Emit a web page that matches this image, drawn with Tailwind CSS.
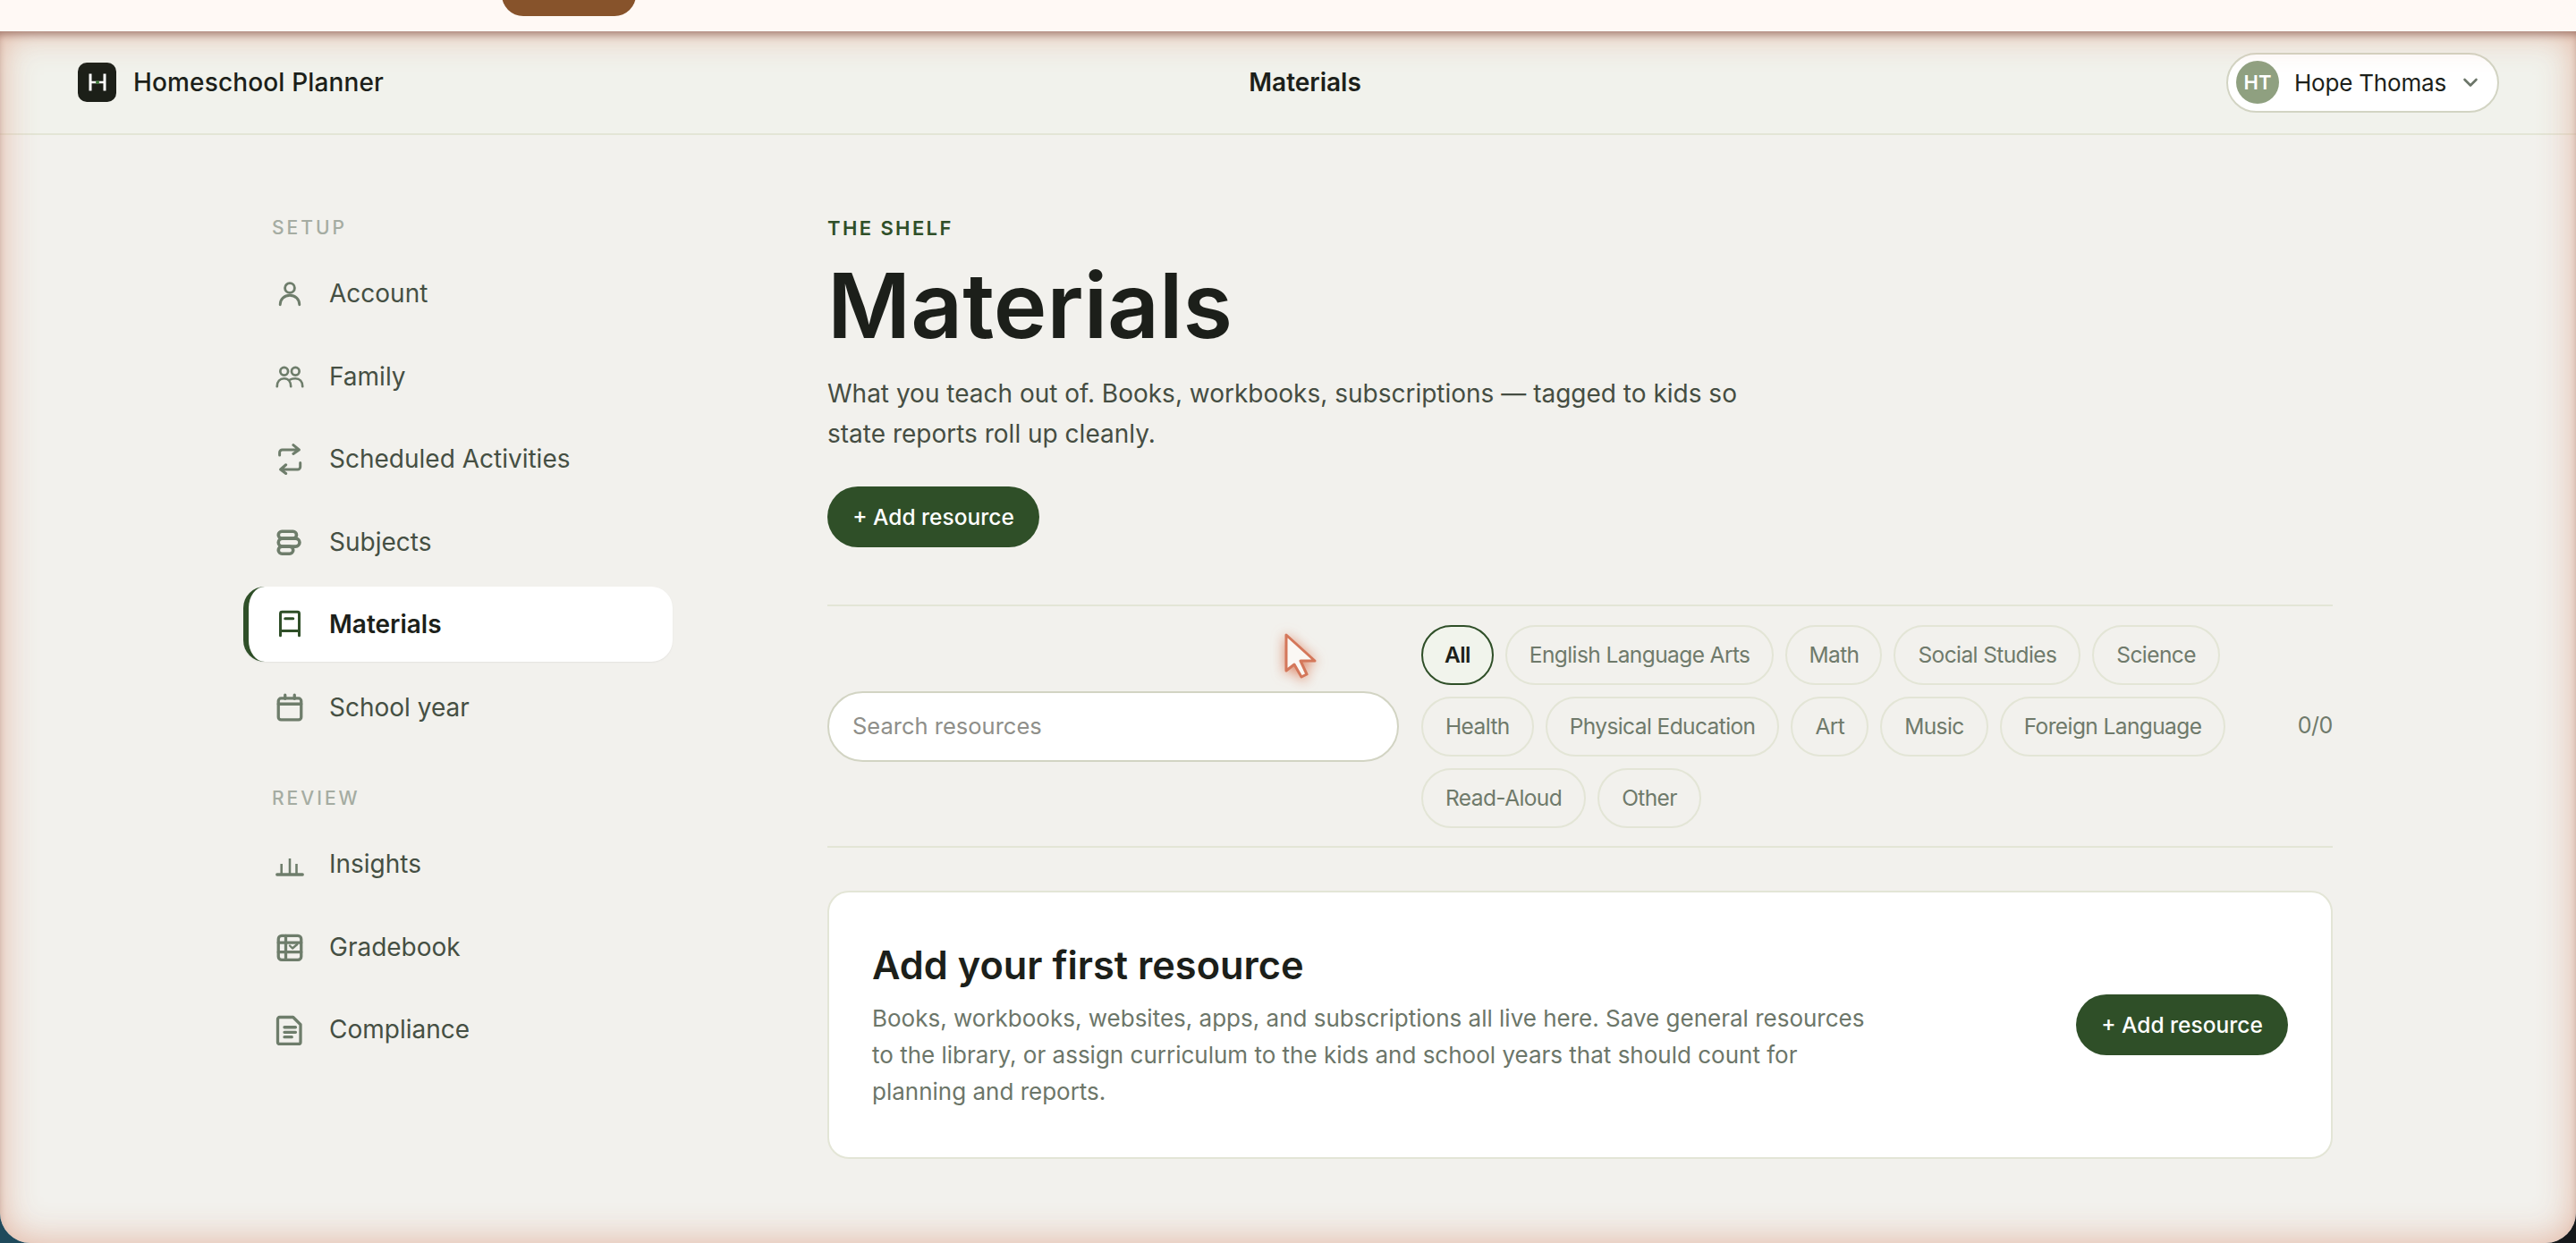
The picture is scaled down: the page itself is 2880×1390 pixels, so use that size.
<!DOCTYPE html>
<html lang="en">
<head>
<meta charset="utf-8">
<title>Materials</title>
<script src="https://cdn.jsdelivr.net/npm/@tailwindcss/browser@4"></script>
</head>
<body class="h-screen overflow-hidden bg-[linear-gradient(90deg,#1f4a5c,#16181a)] [font-family:Inter,sans-serif] text-[#1c1f1a]">
<div class="relative flex h-[1390px] flex-col">
  <div class="h-[35px] shrink-0 overflow-hidden bg-[#fff9f5]">
    <div class="-mt-[30px] ml-[561px] h-[48px] w-[150px] rounded-[30px] bg-[#87532b]"></div>
  </div>
  <div class="relative flex flex-1 flex-col overflow-hidden rounded-b-[34px] bg-[#f2f1ed]">
    <header class="flex h-[116px] shrink-0 items-center justify-between border-b-2 border-[#e3e5d6] bg-[#f1f2ec] pl-[87px] pr-[86px]">
      <div class="flex items-center gap-[19px]">
        <div class="flex h-[44px] w-[43px] items-center justify-center rounded-[10px] bg-[#1c1f18]">
          <svg class="h-[22px] w-[22px]" viewBox="0 0 22 22" fill="none"><path d="M3 1.500v19M19 1.500v19" stroke="#fff" stroke-width="3"/><path d="M3 11h16" stroke="#fff" stroke-width="2.400"/><circle cx="11" cy="11" r="2" fill="#3f7a3a"/></svg>
        </div>
        <span class="text-[28px] font-medium tracking-[0.15px]">Homeschool Planner</span>
      </div>
      <div class="text-[28px] font-semibold">Materials</div>
      <div class="flex h-[67px] w-[305px] items-center rounded-full border-2 border-[#d2d4c3] bg-white pl-[9px]">
        <div class="flex h-[48px] w-[48px] items-center justify-center rounded-full bg-[#8fa080] text-[22px] font-semibold text-white">HT</div>
        <span class="ml-[17px] text-[26px] tracking-[-0.2px]">Hope Thomas</span>
        <svg class="ml-[15px] h-[24px] w-[24px]" viewBox="0 0 24 24" fill="none" stroke="#6b7568" stroke-width="2.600" stroke-linecap="round" stroke-linejoin="round"><path d="M5.500 9l6.500 6.500L18.500 9"/></svg>
      </div>
    </header>
    <div class="mx-auto flex w-[2336px] flex-1">
      <aside class="w-[480px] shrink-0 pt-[89px]">
        <div class="ml-[32px] h-[30px] text-[21px] leading-[30px] font-medium tracking-[3px] text-[#a5aca2]">SETUP</div>
        <nav class="mt-[16px] flex flex-col gap-[8.6px] text-[28px] text-[#454f43]">
          <a class="flex h-[84px] items-center gap-[26px] pl-[34px]">
            <svg class="h-[36px] w-[36px] shrink-0" viewBox="0 0 24 24" fill="none" stroke="#6e7d6b" stroke-width="1.900" stroke-linecap="round" stroke-linejoin="round"><circle cx="12" cy="8" r="3.600"/><path d="M4.800 20.500c0-4.200 3.200-7 7.200-7s7.200 2.800 7.200 7"/></svg>
            Account</a>
          <a class="flex h-[84px] items-center gap-[26px] pl-[34px]">
            <svg class="h-[36px] w-[36px] shrink-0" viewBox="0 0 24 24" fill="none" stroke="#6e7d6b" stroke-width="1.800" stroke-linecap="round" stroke-linejoin="round"><circle cx="7.800" cy="8.200" r="2.900"/><circle cx="16.200" cy="8.200" r="2.900"/><path d="M2.500 19.500c0-3.800 2.200-6 5.300-6s5 2.500 5 6M12 14.500c1-.7 2.700-1 4.200-1 3.100 0 5.300 2.200 5.300 6"/></svg>
            Family</a>
          <a class="flex h-[84px] items-center gap-[26px] pl-[34px]">
            <svg class="h-[36px] w-[36px] shrink-0" viewBox="0 0 24 24" fill="none" stroke="#6e7d6b" stroke-width="2" stroke-linecap="round" stroke-linejoin="round"><path d="M4.400 9.300V7.300a2 2 0 0 1 2-2h12.500M14.600 1.800l4.300 3.500-4.300 3"/><path d="M19.800 15v3a2 2 0 0 1-2 2H5.100M9.100 16.500l-4 3.500 4 3"/></svg>
            Scheduled Activities</a>
          <a class="flex h-[84px] items-center gap-[26px] pl-[34px]">
            <svg class="h-[36px] w-[36px] shrink-0" viewBox="0 0 24 24" fill="none" stroke="#6e7d6b" stroke-width="2.400" stroke-linejoin="round"><rect x="3.500" y="4.200" width="13.500" height="5.200" rx="2.600"/><rect x="3.500" y="9.400" width="15.800" height="6" rx="3"/><rect x="3.500" y="15.400" width="11" height="5.400" rx="2.700"/></svg>
            Subjects</a>
          <a class="flex h-[84px] items-center gap-[26px] rounded-[24px] border-l-[6px] border-[#2f4f28] bg-white pl-[28px] font-semibold text-[#1c1f1a] shadow-[0_1px_2px_rgba(0,0,0,0.06)]">
            <svg class="h-[36px] w-[36px] shrink-0" viewBox="0 0 24 24" fill="none" stroke="#2f4f28" stroke-width="2" stroke-linecap="round" stroke-linejoin="round"><path d="M5 20.500V4.200a1.300 1.300 0 0 1 1.300-1.300h11.400A1.300 1.300 0 0 1 19 4.200v16.300M5 17h14M8.500 7.800h6"/></svg>
            Materials</a>
          <a class="flex h-[84px] items-center gap-[26px] pl-[34px]">
            <svg class="h-[36px] w-[36px] shrink-0" viewBox="0 0 24 24" fill="none" stroke="#6e7d6b" stroke-width="2.200" stroke-linecap="round" stroke-linejoin="round"><rect x="3.500" y="5.300" width="17" height="16" rx="2"/><path d="M3.500 9.500h17M8.500 2.800v2.700M15.500 2.800v2.700"/></svg>
            School year</a>
        </nav>
        <div class="ml-[32px] mt-[45px] h-[30px] text-[21px] leading-[30px] font-medium tracking-[3px] text-[#a5aca2]">REVIEW</div>
        <nav class="mt-[16px] flex flex-col gap-[8.6px] text-[28px] text-[#454f43]">
          <a class="flex h-[84px] items-center gap-[26px] pl-[34px]">
            <svg class="h-[36px] w-[36px] shrink-0" viewBox="0 0 24 24" fill="none" stroke="#6e7d6b" stroke-width="1.700"><path d="M2.500 20h19" stroke-width="2.200" stroke-linecap="round"/><path d="M5.800 20v-8M12 20V8M17 20v-8"/></svg>
            Insights</a>
          <a class="flex h-[84px] items-center gap-[26px] pl-[34px]">
            <svg class="h-[36px] w-[36px] shrink-0" viewBox="0 0 24 24" fill="none" stroke="#6e7d6b" stroke-width="2.200" stroke-linecap="round" stroke-linejoin="round"><rect x="3.500" y="3.600" width="17" height="18" rx="2.500"/><path d="M3.500 8.700h17M3.500 15.800h17M9 3.600v18"/><path d="M12 11l2 2 3.500-3" stroke-width="1.600"/></svg>
            Gradebook</a>
          <a class="flex h-[84px] items-center gap-[26px] pl-[34px]">
            <svg class="h-[36px] w-[36px] shrink-0" viewBox="0 0 24 24" fill="none" stroke="#6e7d6b" stroke-width="2.200" stroke-linecap="round" stroke-linejoin="round"><path d="M14.500 3H4.500A1.500 1.500 0 0 0 3 4.500v17A1.500 1.500 0 0 0 4.500 23h14a1.500 1.500 0 0 0 1.500-1.500V8.500z"/><path d="M8 10.500h8.300M8 14.200h8.300M8 17.800h5.500"/></svg>
            Compliance</a>
        </nav>
      </aside>
      <main class="ml-[173px] min-w-0 flex-1 pt-[89px]">
        <div class="h-[30px] text-[22px] leading-[30px] font-semibold tracking-[2.400px] text-[#2f4f28]">THE SHELF</div>
        <h1 class="mt-[13px] text-[101px] leading-[116px] font-semibold tracking-[0px]">Materials</h1>
        <p class="mt-[19px] w-[1030px] text-[28px] leading-[45px] text-[#454d42]">What you teach out of. Books, workbooks, subscriptions — tagged to kids so state reports roll up cleanly.</p>
        <button class="mt-[36px] flex h-[68px] w-[237px] items-center justify-center rounded-full bg-[#2f4f28] text-[24.5px] font-medium text-white">+ Add resource</button>
        <section class="mt-[64px] flex h-[272px] items-center border-y-2 border-[#e3e5d6]">
          <div class="flex h-[79px] w-[639px] shrink-0 items-center rounded-full border-2 border-[#d2d4c3] bg-white pl-[26px] text-[25.5px] text-[#8f8f8a]">Search resources</div>
          <div class="ml-[25px] flex flex-1 flex-wrap gap-[13px] text-[24.5px] tracking-[-0.6px] text-[#6f7a6b]">
            <span class="flex h-[67px] items-center rounded-full border-2 border-[#2f4f28] bg-[#f1f4ec] px-[24px] font-semibold text-[#1c1f1a]">All</span>
            <span class="flex h-[67px] items-center rounded-full border-2 border-[#e3e5d6] px-[25px]">English Language Arts</span>
            <span class="flex h-[67px] items-center rounded-full border-2 border-[#e3e5d6] px-[24px]">Math</span>
            <span class="flex h-[67px] items-center rounded-full border-2 border-[#e3e5d6] px-[25px]">Social Studies</span>
            <span class="flex h-[67px] items-center rounded-full border-2 border-[#e3e5d6] px-[25px]">Science</span>
            <span class="flex h-[67px] items-center rounded-full border-2 border-[#e3e5d6] px-[25px]">Health</span>
            <span class="flex h-[67px] items-center rounded-full border-2 border-[#e3e5d6] px-[25px]">Physical Education</span>
            <span class="flex h-[67px] items-center rounded-full border-2 border-[#e3e5d6] px-[25px]">Art</span>
            <span class="flex h-[67px] items-center rounded-full border-2 border-[#e3e5d6] px-[25px]">Music</span>
            <span class="flex h-[67px] items-center rounded-full border-2 border-[#e3e5d6] px-[25px]">Foreign Language</span>
            <span class="flex h-[67px] items-center rounded-full border-2 border-[#e3e5d6] px-[25px]">Read-Aloud</span>
            <span class="flex h-[67px] items-center rounded-full border-2 border-[#e3e5d6] px-[25px]">Other</span>
          </div>
          <div class="ml-[25px] w-[40px] shrink-0 text-right text-[25px] tracking-[-0.4px] text-[#6f7a6b]">0/0</div>
        </section>
        <section class="mt-[48px] flex h-[300px] items-center justify-between rounded-[24px] border-2 border-[#e3e5d6] bg-white pl-[48px] pr-[48px]">
          <div class="w-[1110px]">
            <h2 class="text-[43.3px] leading-[54px] font-semibold">Add your first resource</h2>
            <p class="mt-[12px] text-[26px] leading-[41px] text-[#6c7669]">Books, workbooks, websites, apps, and subscriptions all live here. Save general resources to the library, or assign curriculum to the kids and school years that should count for planning and reports.</p>
          </div>
          <button class="flex h-[68px] w-[237px] items-center justify-center rounded-full bg-[#2f4f28] text-[24.5px] font-medium text-white">+ Add resource</button>
        </section>
      </main>
    </div>
    <div class="pointer-events-none absolute inset-0 rounded-b-[34px] shadow-[inset_0_7px_9px_-3px_rgba(110,60,50,0.5),inset_0_0_40px_rgba(224,172,150,0.9)]"></div>
  </div>
  <svg class="absolute left-[1428px] top-[700px] h-[70px] w-[56px] drop-shadow-[0_2px_7px_rgba(214,100,60,0.75)]" viewBox="0 0 56 70" fill="none"><path d="M10 10V50l9-7 8 14 6-3-7-15h16z" fill="#fbf8f4" stroke="#d4775a" stroke-width="3" stroke-linejoin="round"/></svg>
</div>
</body>
</html>
